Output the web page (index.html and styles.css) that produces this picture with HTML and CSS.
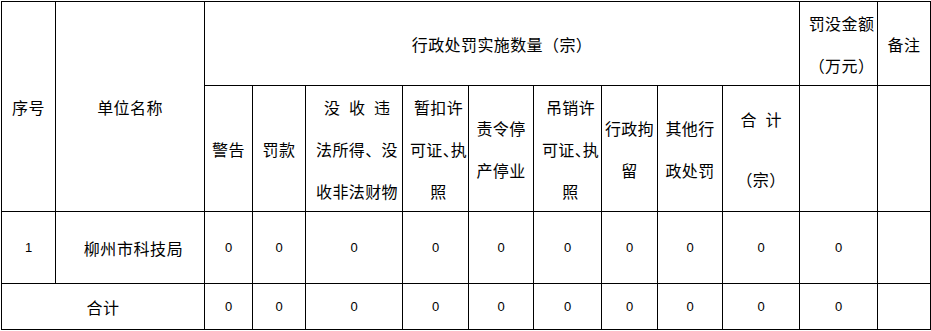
FILE: index.html
```html
<!DOCTYPE html>
<html lang="zh-CN">
<head>
<meta charset="utf-8">
<title>行政处罚实施数量</title>
<link rel="stylesheet" href="styles.css">
</head>
<body>
<div class="sheet">
  <div class="cell c-seq">序号</div>
  <div class="cell c-unit">单位名称</div>
  <div class="cell c-title">行政处罚实施数量（宗）</div>
  <div class="cell c-amount multi shift"><span class="t">罚没金额<br>（万元）</span></div>
  <div class="cell c-note">备注</div>

  <div class="cell">警告</div>
  <div class="cell">罚款</div>
  <div class="cell multi shift"><span class="t"><span class="wide">没收违</span><br>法所得、没<br>收非法财物</span></div>
  <div class="cell multi shift"><span class="t">暂扣许<br>可证<span class="half">、</span>执<br>照</span></div>
  <div class="cell multi"><span class="t">责令停<br>产停业</span></div>
  <div class="cell multi shift"><span class="t">吊销许<br>可证<span class="half">、</span>执<br>照</span></div>
  <div class="cell multi"><span class="t">行政拘<br>留</span></div>
  <div class="cell multi"><span class="t">其他行<br>政处罚</span></div>
  <div class="cell total-head"><span class="line"><span class="spread">合计</span></span><span class="line">（宗）</span></div>
  <div class="cell"></div>
  <div class="cell"></div>

  <div class="cell num">1</div>
  <div class="cell data-name name-shift">柳州市科技局</div>
  <div class="cell num">0</div>
  <div class="cell num">0</div>
  <div class="cell num">0</div>
  <div class="cell num">0</div>
  <div class="cell num">0</div>
  <div class="cell num">0</div>
  <div class="cell num">0</div>
  <div class="cell num">0</div>
  <div class="cell num">0</div>
  <div class="cell num">0</div>
  <div class="cell"></div>

  <div class="cell c-sum data-name">合计</div>
  <div class="cell num">0</div>
  <div class="cell num">0</div>
  <div class="cell num">0</div>
  <div class="cell num">0</div>
  <div class="cell num">0</div>
  <div class="cell num">0</div>
  <div class="cell num">0</div>
  <div class="cell num">0</div>
  <div class="cell num">0</div>
  <div class="cell num">0</div>
  <div class="cell"></div>
</div>
</body>
</html>
```

FILE: styles.css
```css
html, body {
  margin: 0;
  padding: 0;
  background: #fff;
}

body {
  padding: 1px 0 0 1px;
  font-family: "Noto Sans CJK SC", "Noto Sans", sans-serif;
  font-size: 16px;
  color: #000;
}

.sheet {
  display: grid;
  grid-template-columns: 54px 149px 48px 53px 97px 66px 65px 68px 56px 65px 77px 78px 53px;
  grid-template-rows: 84px 126px 72px 46px;
  width: max-content;
  border-top: 1px solid #000;
  border-left: 1px solid #000;
}

.cell {
  box-sizing: border-box;
  border-right: 1px solid #000;
  border-bottom: 1px solid #000;
  display: flex;
  align-items: center;
  justify-content: center;
  text-align: center;
  white-space: nowrap;
  line-height: 20px;
  letter-spacing: 0.4px;
}

.t {
  display: block;
}

.c-seq { grid-column: 1; grid-row: 1 / span 2; }
.c-unit { grid-column: 2; grid-row: 1 / span 2; }
.c-title { grid-column: 3 / span 9; grid-row: 1; }
.c-amount { grid-column: 12; grid-row: 1; }
.c-note { grid-column: 13; grid-row: 1; }
.c-sum { grid-column: 1 / span 2; }

.multi {
  line-height: 42px;
}

.shift {
  padding-left: 6px;
}

.wide {
  letter-spacing: 9px;
  margin-right: -9px;
}

.half {
  font-feature-settings: "halt";
  letter-spacing: 0;
}

.total-head {
  flex-direction: column;
  gap: 18px;
  line-height: 42px;
}

.total-head .line {
  display: block;
}

.spread {
  letter-spacing: 9px;
  margin-right: -9px;
}

.num {
  font-family: "Liberation Sans", Arial, sans-serif;
  font-size: 13px;
  letter-spacing: 0;
}

.data-name {
  letter-spacing: 0.6px;
}

.name-shift {
  padding-left: 7px;
}
```
